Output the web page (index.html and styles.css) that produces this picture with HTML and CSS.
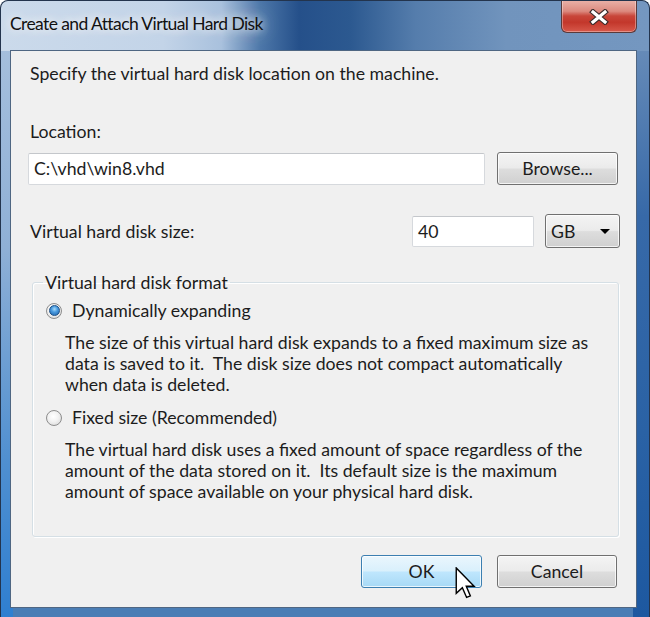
FILE: index.html
```html
<!DOCTYPE html>
<html>
<head>
<meta charset="utf-8">
<link rel="stylesheet" href="styles.css">
</head>
<body>
<div class="window">
  <div class="titlebar">
    <div class="title">Create and Attach Virtual Hard Disk</div>
    <div class="close">
      <svg width="20" height="16" viewBox="0 0 20 16">
        <path d="M4 3 L16 13 M16 3 L4 13" stroke="#3b2b2b" stroke-width="5.5" stroke-linecap="square"/>
        <path d="M4 3 L16 13 M16 3 L4 13" stroke="#ffffff" stroke-width="3.2" stroke-linecap="square"/>
      </svg>
    </div>
  </div>
  <div class="client">
    <p class="intro">Specify the virtual hard disk location on the machine.</p>
    <p class="label">Location:</p>
    <div class="row loc-row">
      <div class="textbox loc-box">C:\vhd\win8.vhd</div>
      <div class="btn browse">Browse...</div>
    </div>
    <div class="row size-row">
      <span class="label size-label">Virtual hard disk size:</span>
      <div class="textbox size-box">40</div>
      <div class="combo"><span>GB</span><span class="arrow"></span></div>
    </div>
    <fieldset class="group">
      <legend>Virtual hard disk format</legend>
      <div class="option"><span class="radio checked"></span><span>Dynamically expanding</span></div>
      <p class="desc">The size of this virtual hard disk expands to a fixed maximum size as<br>data is saved to it.&nbsp; The disk size does not compact automatically<br>when data is deleted.</p>
      <div class="option"><span class="radio"></span><span>Fixed size (Recommended)</span></div>
      <p class="desc">The virtual hard disk uses a fixed amount of space regardless of the<br>amount of the data stored on it.&nbsp; Its default size is the maximum<br>amount of space available on your physical hard disk.</p>
    </fieldset>
    <div class="actions">
      <div class="btn ok hot">OK
        <svg class="cursor" width="21" height="32" viewBox="-0.6 -0.6 13 20.4">
          <path d="M0 0 L0 16.2 L3.9 12.6 L6.6 18.8 L9 17.8 L6.4 11.7 L11.4 11.7 Z" fill="#ffffff" stroke="#000000" stroke-width="0.9" stroke-linejoin="miter"/>
        </svg>
      </div>
      <div class="btn cancel">Cancel</div>
    </div>
  </div>
</div>
</body>
</html>
```

FILE: styles.css
```css
* { box-sizing: border-box; }
html, body { margin: 0; padding: 0; background: #ffffff; }
body {
  font-family: Lato, "Noto Sans", sans-serif;
  font-size: 17.7px;
  color: #1c1c1c;
}
.window {
  width: 650px;
  height: 617px;
  border: 1px solid #23344d;
  border-bottom: none;
  border-radius: 8px 8px 0 0;
  overflow: hidden;
  background:
    linear-gradient(to right, #cbdaeb 0%, #c3d4e8 25%, #a9c1dd 34%, #4d77a9 40%, #25508a 46%, #2c5990 54%, #557dac 64%, #7194bd 78%, #7497c0 100%) top / 100% 50px no-repeat,
    linear-gradient(#aac2de, #8fb0d6 40%, #4f8fd0 75%, #2f7fd0) left / 12px 100% no-repeat,
    linear-gradient(#7394bc, #3769a8 35%, #2a62a5 70%, #1d58a0) right / 16px 100% no-repeat,
    #4a7db5;
}
.titlebar {
  height: 49px;
  display: flex;
  align-items: flex-start;
}
.title {
  padding: 12px 0 0 9px;
  font-size: 17.5px;
  letter-spacing: -0.6px;
  color: #111;
  text-shadow: 0 0 8px rgba(255,255,255,0.95), 0 0 16px rgba(255,255,255,0.7), 0 0 24px rgba(255,255,255,0.5);
}
.close {
  margin-left: auto;
  margin-right: 12px;
  width: 76px;
  height: 33px;
  margin-top: -1px;
  border: 1px solid #5a3a3a;
  border-top: none;
  border-radius: 0 0 6px 6px;
  background: linear-gradient(#eab3aa 0%, #dc8a7f 35%, #c8463a 50%, #c3372b 70%, #d7594b 100%);
  box-shadow: inset 0 0 0 1px rgba(255,255,255,0.35);
  display: flex;
  align-items: center;
  justify-content: center;
}
.close svg { display: block; margin-top: 2px; }
.client {
  margin: 0 12px 0 9px;
  height: 558px;
  border: 1px solid #4f6682;
  background: #f0f0f0;
  padding: 12px 18px 0 17px;
}
p { margin: 0; }
.intro, .label { line-height: 21px; padding-left: 2px; }
.label { margin-top: 37px; }
.row { display: flex; align-items: center; }
.loc-row { margin-top: 10px; height: 33px; gap: 12px; }
.textbox {
  height: 32px;
  background: #fff;
  border: 1px solid #d6d9dd;
  border-top-color: #c4c7cb;
  border-radius: 2px;
  padding: 0 5px;
  line-height: 30px;
}
.loc-box { flex: 1; }
.btn {
  height: 33px;
  border: 1px solid #707070;
  border-radius: 3px;
  background: linear-gradient(#f4f4f4 0%, #ebebeb 48%, #dddddd 52%, #d0d0d0 100%);
  box-shadow: inset 0 0 0 1px rgba(255,255,255,0.75);
  display: flex;
  align-items: center;
  justify-content: center;
  line-height: 21px;
}
.browse { width: 121px; }
.size-row { margin-top: 29px; height: 34px; }
.size-label { margin-top: 0; flex: 1; }
.size-box { width: 122px; height: 31px; line-height: 29px; }
.combo {
  width: 75px;
  height: 34px;
  margin-left: 11px;
  margin-right: -2px;
  border: 1px solid #707070;
  border-radius: 3px;
  background: linear-gradient(#f4f4f4 0%, #ebebeb 48%, #dddddd 52%, #d0d0d0 100%);
  box-shadow: inset 0 0 0 1px rgba(255,255,255,0.75);
  display: flex;
  align-items: center;
  justify-content: space-between;
  padding: 0 9px 0 5px;
}
.arrow {
  width: 0; height: 0;
  border-left: 5px solid transparent;
  border-right: 5px solid transparent;
  border-top: 5px solid #000;
}
.group {
  margin: 24px -1px 0 4px;
  padding: 7px 10px 34px 10px;
  border: 1px solid #d5dfe5;
  border-radius: 3px;
  box-shadow: inset 1px 1px 0 #ffffff, 1px 1px 0 #ffffff;
  min-width: 0;
}
.group legend {
  padding: 0 2px;
  line-height: 21px;
}
.option {
  display: flex;
  align-items: center;
  line-height: 21px;
  height: 21px;
}
.option + .desc { margin-top: 11px; }
.desc + .option { margin-top: 12px; }
.radio {
  width: 16px; height: 16px;
  margin-left: 3px;
  margin-right: 10px;
  border-radius: 50%;
  border: 1px solid #8d8d8d;
  background: radial-gradient(circle at 45% 40%, #ffffff 0%, #f2f2f2 45%, #d2d2d2 100%);
  display: flex;
  align-items: center;
  justify-content: center;
}
.radio.checked::after {
  content: "";
  width: 9px; height: 9px;
  border-radius: 50%;
  border: 1px solid #1b4f86;
  background: radial-gradient(circle at 50% 35%, #a9dcfb 0%, #4b9ce0 40%, #1e63ab 100%);
}
.desc {
  line-height: 21px;
  padding-left: 22px;
}
.actions {
  margin-top: 18px;
  display: flex;
  justify-content: flex-end;
  gap: 15px;
  margin-right: 1px;
}
.ok { width: 121px; position: relative; }
.cancel { width: 120px; }
.btn.hot {
  border-color: #3c7fb1;
  background: linear-gradient(#eaf6fd 0%, #d9f0fc 48%, #bee6fd 52%, #a7d9f5 100%);
}
.cursor {
  position: absolute;
  left: 93px;
  top: 11px;
}
```
